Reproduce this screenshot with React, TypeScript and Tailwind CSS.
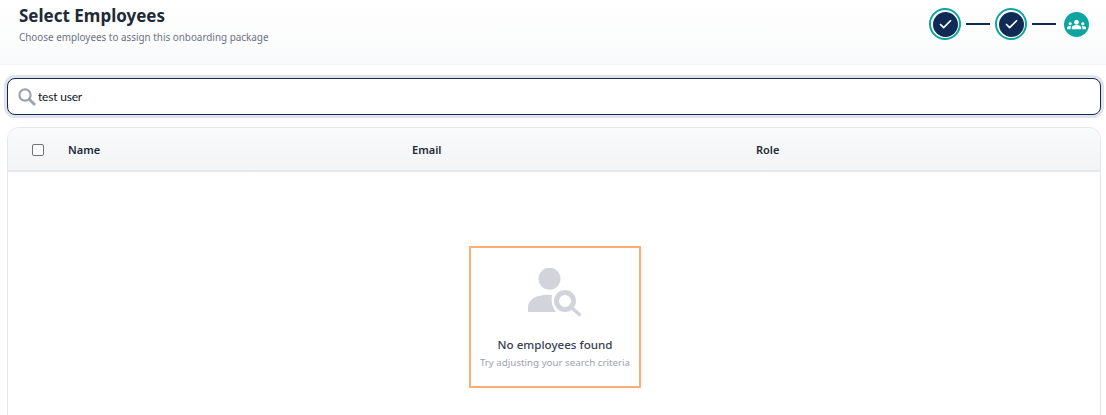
import React from 'react'
import { Check } from 'lucide-react'
import { MdGroups } from 'react-icons/md'

function DoneStep() {
  return (
    <div className="flex h-8 w-8 items-center justify-center rounded-full border-2 border-[#0ea5a0] bg-white">
      <div className="flex h-[25px] w-[25px] items-center justify-center rounded-full bg-[#102a56]">
        <Check className="h-[15px] w-[15px] text-white" strokeWidth={2.75} />
      </div>
    </div>
  )
}

function SearchIcon() {
  return (
    <svg width="18" height="18" viewBox="0 0 18 18" fill="none" stroke="currentColor" className="text-[#9ca3af]">
      <circle cx="7" cy="7" r="5.600" strokeWidth="2.200" />
      <path d="M11 11l6 6" strokeWidth="2.800" />
    </svg>
  )
}

function EmptyIcon() {
  return (
    <svg width="54" height="49" viewBox="0 0 54 49" className="text-[#d1d5db]" fill="currentColor">
      <circle cx="21.500" cy="10.700" r="11" />
      <path d="M0 44v-5c0-6 6-10 11-11 4-1 8-1.500 13-1-1 6 0 12 4 17z" />
      <path fillRule="evenodd" d="M37 22a11 11 0 1 0 0 22a11 11 0 0 0 0-22zm0 5a6 6 0 1 1 0 12a6 6 0 0 1 0-12z" />
      <path d="M44 40l8.500 7.500" fill="none" stroke="currentColor" strokeWidth="3.500" />
    </svg>
  )
}

export default function App() {
  return (
    <main className="h-[415px] overflow-hidden bg-white font-['Noto_Sans',sans-serif]">
      {/* Header */}
      <header className="flex h-[65px] items-start justify-between border-b border-[#f3f4f6] bg-gradient-to-b from-white to-[#f9fafb] pl-[19px] pr-[17px]">
        <div className="pt-[5px]">
          <h1 className="text-[17px] leading-[22px] font-bold text-[#1f2937]">Select Employees</h1>
          <p className="mt-[3px] text-[9.900px] leading-[14px] text-[#6b7280]">
            Choose employees to assign this onboarding package
          </p>
        </div>
        <div className="flex items-center gap-[5px] pt-[8px]">
          <DoneStep />
          <div className="h-0.5 w-6 bg-[#102a56]" />
          <DoneStep />
          <div className="h-0.5 w-6 bg-[#102a56]" />
          <div className="ml-[3px] flex h-[25px] w-[25px] items-center justify-center rounded-full bg-[#0ea5a0]">
            <MdGroups className="h-[19px] w-[19px] text-white" />
          </div>
        </div>
      </header>

      <div className="pl-[7px] pr-[5px] pt-[13px]">
        {/* Search */}
        <div className="flex h-[37px] items-center gap-[2px] rounded-lg border border-[#102a56] bg-white pl-[10px] shadow-[0_0_0_3px_#e0e3ea]">
          <SearchIcon />
          <span className="font-['Lato',sans-serif] text-[12px] tracking-[-0.2px] text-[#111827]">test user</span>
        </div>

        {/* Table */}
        <div className="mt-3 h-[300px] rounded-t-xl border border-[#e5e7eb] bg-white">
          <div className="grid h-[44px] grid-cols-[344px_344px_1fr] items-center rounded-t-xl border-b-2 border-[#e5e7eb] bg-gradient-to-b from-[#f9fafb] to-[#f3f4f6] pl-[60px] pt-[2px]">
            <div className="relative text-[11px] font-semibold text-[#1f2937]">
              <span className="absolute top-[2px] -left-[36px] h-3 w-3 rounded-[2px] border border-[#6b7280] bg-white" />
              Name
            </div>
            <div className="text-[11px] font-semibold text-[#1f2937]">Email</div>
            <div className="text-[11px] font-semibold text-[#1f2937]">Role</div>
          </div>

          <div className="flex justify-center pl-[2px] pt-[74px]">
            <div className="flex h-[142px] w-[172px] flex-col items-center border-2 border-[#fdae72] pt-5">
              <EmptyIcon />
              <p className="mt-5 text-[11.600px] leading-4 font-medium text-[#374151]">No employees found</p>
              <p className="mt-[3px] text-[9.750px] leading-[14px] whitespace-nowrap text-[#9ca3af]">
                Try adjusting your search criteria
              </p>
            </div>
          </div>
        </div>
      </div>
    </main>
  )
}
